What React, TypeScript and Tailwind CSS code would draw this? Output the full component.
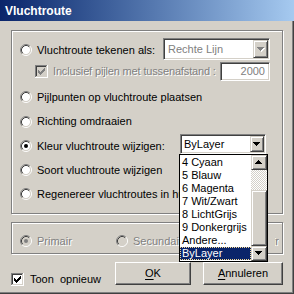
import React from "react";

const sunken =
  "border border-t-[#808080] border-l-[#808080] border-r-white border-b-white p-[1px] shadow-[inset_1px_1px_0_#404040,inset_-1px_-1px_0_#d4d0c8]";
const raisedSmall =
  "border border-t-[#d4d0c8] border-l-[#d4d0c8] border-r-[#404040] border-b-[#404040] shadow-[inset_1px_1px_0_#fff,inset_-1px_-1px_0_#808080] bg-[#d4d0c8]";
const raisedBtn =
  "border border-t-white border-l-white border-r-[#404040] border-b-[#404040] shadow-[inset_-1px_-1px_0_#808080] bg-[#d4d0c8]";
const disabledText = "text-[#808080] [text-shadow:1px_1px_0_#fff]";

function Radio({ checked = false, disabled = false }: { checked?: boolean; disabled?: boolean }) {
  return (
    <svg width="12" height="12" viewBox="0 0 12 12" className="shrink-0">
      <circle cx="6" cy="6" r="4.2" fill={disabled ? "#d4d0c8" : "#fff"} />
      <path d="M9.89 2.11 A5.5 5.5 0 0 0 2.11 9.89" stroke="#808080" fill="none" strokeWidth="1" />
      <path d="M9.89 2.11 A5.5 5.5 0 0 1 2.11 9.89" stroke="#fff" fill="none" strokeWidth="1" />
      <path d="M9.18 2.82 A4.5 4.5 0 0 0 2.82 9.18" stroke="#404040" fill="none" strokeWidth="1" />
      <path d="M9.18 2.82 A4.5 4.5 0 0 1 2.82 9.18" stroke="#d4d0c8" fill="none" strokeWidth="1" />
      {checked && <circle cx="6" cy="6" r="2" fill={disabled ? "#808080" : "#000"} />}
    </svg>
  );
}

function Check({ checked = false, disabled = false }: { checked?: boolean; disabled?: boolean }) {
  const cols: [number, number][] = [
    [3, 5],
    [4, 6],
    [5, 7],
    [6, 6],
    [7, 5],
    [8, 4],
    [9, 3],
  ];
  return (
    <svg width="13" height="13" viewBox="0 0 13 13" shapeRendering="crispEdges" className="shrink-0">
      <rect x="0" y="0" width="13" height="13" fill="#fff" />
      <rect x="0" y="0" width="12" height="1" fill="#808080" />
      <rect x="0" y="0" width="1" height="12" fill="#808080" />
      <rect x="1" y="1" width="10" height="1" fill="#404040" />
      <rect x="1" y="1" width="1" height="10" fill="#404040" />
      <rect x="1" y="11" width="11" height="1" fill="#d4d0c8" />
      <rect x="11" y="1" width="1" height="11" fill="#d4d0c8" />
      <rect x="2" y="2" width="9" height="9" fill={disabled ? "#d4d0c8" : "#fff"} />
      {checked &&
        cols.map(([x, y]) => (
          <rect key={x} x={x} y={y} width="1" height="3" fill={disabled ? "#808080" : "#000"} />
        ))}
    </svg>
  );
}

function Arrow({ up = false, disabled = false }: { up?: boolean; disabled?: boolean }) {
  const rows = [
    [0, 7],
    [1, 5],
    [2, 3],
    [3, 1],
  ];
  const color = disabled ? "#808080" : "#000";
  return (
    <svg width="8" height="5" viewBox="0 0 8 5" shapeRendering="crispEdges">
      {disabled &&
        rows.map(([i, w]) => (
          <rect key={"s" + i} x={i + 1} y={(up ? 3 - i : i) + 1} width={w} height="1" fill="#fff" />
        ))}
      {rows.map(([i, w]) => (
        <rect key={i} x={i} y={up ? 3 - i : i} width={w} height="1" fill={color} />
      ))}
    </svg>
  );
}

export default function App() {
  return (
    <div className="relative w-[294px] h-[294px] bg-[#d4d0c8] overflow-hidden font-['Liberation_Sans',Arial,sans-serif] text-[11px] text-black leading-none shadow-[inset_-1px_-1px_0_#404040,inset_-2px_-2px_0_#808080]">
      {/* Title bar */}
      <div className="h-[21px] bg-linear-to-r from-[#0a246a] to-[#a6caf0] flex items-center pl-[5px] text-white font-bold text-[12px]">
        Vluchtroute
      </div>

      <div className="pl-[11px] pt-[9px] flex flex-col">
        {/* Group box 1 */}
        <div className="w-[272px] h-[184px] border border-[#808080] shadow-[inset_1px_1px_0_#fff,1px_1px_0_#fff] flex flex-col pt-[7px]">
          {/* Row 1 */}
          <div className="flex h-[22px]">
            <div className="w-[151px] pl-[8px] pt-[2px] flex items-center gap-[5px]">
              <Radio />
              <span className="whitespace-nowrap">Vluchtroute tekenen als:</span>
            </div>
            <div className={`${sunken} w-[107px] h-[22px] bg-white flex`}>
              <div className="flex-1 flex items-center pl-[3px] text-[#808080]">Rechte Lijn</div>
              <div className={`${raisedSmall} w-[15px] h-full flex items-center justify-center`}>
                <Arrow disabled />
              </div>
            </div>
          </div>

          {/* Row 2 */}
          <div className="flex items-center h-[19px] mt-[2px]">
            <div className="w-[208px] pl-[23px] flex items-center gap-[5px]">
              <Check checked disabled />
              <span className={`${disabledText} whitespace-nowrap tracking-[-0.15px]`}>
                Inclusief pijlen met tussenafstand :
              </span>
            </div>
            <div className={`${sunken} w-[50px] h-[19px] bg-white flex items-center justify-end pr-[4px] text-[#808080]`}>
              2000
            </div>
          </div>

          {/* Row 3 */}
          <div className="flex items-center h-[24px] mt-[4px] pl-[8px] gap-[5px]">
            <Radio />
            <span>Pijlpunten op vluchtroute plaatsen</span>
          </div>

          {/* Row 4 */}
          <div className="flex items-center h-[25px] pl-[8px] gap-[5px]">
            <Radio />
            <span>Richting omdraaien</span>
          </div>

          {/* Row 5 */}
          <div className="flex h-[24px]">
            <div className="w-[168px] pl-[8px] flex items-center gap-[5px]">
              <Radio checked />
              <span className="whitespace-nowrap">Kleur vluchtroute wijzigen:</span>
            </div>
            <div className={`${sunken} w-[86px] h-[20px] bg-white flex`}>
              <div className="flex-1 flex items-center pl-[2px]">ByLayer</div>
              <div className={`${raisedSmall} w-[14px] h-full flex items-center justify-center`}>
                <Arrow />
              </div>
            </div>
          </div>

          {/* Row 6 */}
          <div className="flex items-center h-[24px] pl-[8px] gap-[5px]">
            <Radio />
            <span>Soort vluchtroute wijzigen</span>
          </div>

          {/* Row 7 */}
          <div className="flex items-center h-[24px] pl-[8px] gap-[5px]">
            <Radio />
            <span className="w-[142px] overflow-hidden whitespace-nowrap leading-[14px]">
              Regenereer vluchtroutes in huidige
            </span>
          </div>
        </div>

        {/* Group box 2 */}
        <div className="w-[272px] h-[32px] mt-[8px] border border-[#808080] shadow-[inset_1px_1px_0_#fff,1px_1px_0_#fff] pt-[11px] pl-[8px]">
          <div className="flex items-center h-[14px]">
            <div className="w-[96px] flex items-center gap-[5px]">
              <Radio checked disabled />
              <span className={disabledText}>Primair</span>
            </div>
            <div className="w-[159px] flex items-center gap-[5px]">
              <Radio disabled />
              <span className={`${disabledText} w-[46px] overflow-hidden whitespace-nowrap leading-[14px]`}>
                Secundair
              </span>
            </div>
            <div className="w-[4px] overflow-hidden flex justify-end">
              <span className={`${disabledText} whitespace-nowrap leading-[14px]`}>Tertiair</span>
            </div>
          </div>
        </div>

        {/* Bottom row */}
        <div className="flex h-[23px] mt-[8px]">
          <div className="w-[104px] h-[13px] mt-[11px] flex items-center gap-[6px] whitespace-pre">
            <Check checked />
            <span>Toon  opnieuw</span>
          </div>
          <div className={`${raisedBtn} w-[76px] h-[23px] flex items-center justify-center`}>
            <span>
              <span className="underline underline-offset-[2px]">O</span>K
            </span>
          </div>
          <div className={`${raisedBtn} w-[80px] h-[23px] ml-[12px] flex items-center justify-center`}>
            <span>
              <span className="underline underline-offset-[2px]">A</span>nnuleren
            </span>
          </div>
        </div>
      </div>

      {/* Dropdown list overlay */}
      <div className="absolute left-[179px] top-[154px] w-[89px] h-[108px] border border-black bg-white flex">
        <div className="w-[71px] flex flex-col pt-[1px]">
          {["4 Cyaan", "5 Blauw", "6 Magenta", "7 Wit/Zwart", "8 LichtGrijs", "9 Donkergrijs", "Andere..."].map((t) => (
            <div key={t} className="h-[13px] leading-[13px] pl-[2px] whitespace-nowrap">
              {t}
            </div>
          ))}
          <div className="h-[13px] leading-[13px] pl-[2px] bg-[#0a246a] text-white outline outline-1 outline-dotted outline-[#f5db95] -outline-offset-1">
            ByLayer
          </div>
        </div>
        <div className="w-[16px] flex flex-col">
          <div className={`${raisedSmall} h-[15px] flex items-center justify-center`}>
            <Arrow up />
          </div>
          <div className="h-[20px] bg-[repeating-conic-gradient(#d4d0c8_0_25%,#fff_0_50%)] bg-[length:2px_2px]" />
          <div className={`${raisedSmall} flex-1`} />
          <div className={`${raisedSmall} h-[15px] flex items-center justify-center`}>
            <Arrow />
          </div>
        </div>
      </div>
    </div>
  );
}
